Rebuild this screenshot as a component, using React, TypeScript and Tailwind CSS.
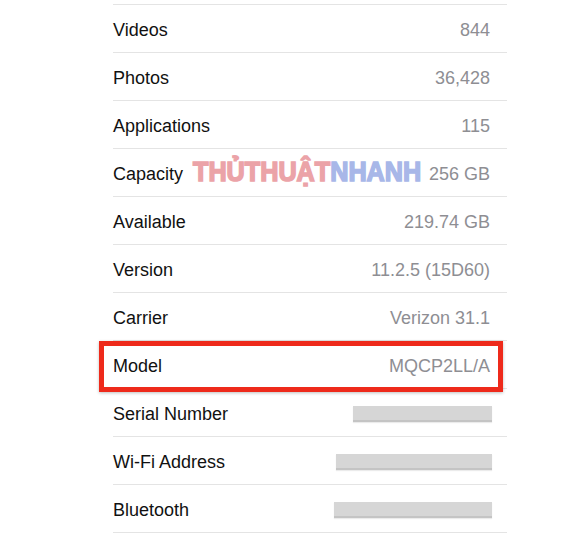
import type { ReactNode } from 'react';

type Row = { label: string; value?: string; bar?: number };

const ROWS: Row[] = [
  { label: 'Videos', value: '844' },
  { label: 'Photos', value: '36,428' },
  { label: 'Applications', value: '115' },
  { label: 'Capacity', value: '256 GB' },
  { label: 'Available', value: '219.74 GB' },
  { label: 'Version', value: '11.2.5 (15D60)' },
  { label: 'Carrier', value: 'Verizon 31.1' },
  { label: 'Model', value: 'MQCP2LL/A' },
  { label: 'Serial Number', bar: 139 },
  { label: 'Wi-Fi Address', bar: 156 },
  { label: 'Bluetooth', bar: 158 },
];

// blurred-out value, drawn as a grey strip like in the screenshot
function Redacted({ width }: { width: number }) {
  return (
    <span
      className="block h-[16px] -mr-[2px] bg-[#d6d6d6] border-b-2 border-[#c4c4c4] shadow-[0_1px_1px_rgba(0,0,0,0.08)]"
      style={{ width }}
    />
  );
}

function InfoRow({ row, children }: { row: Row; children?: ReactNode }) {
  return (
    <div className="relative h-[48px] flex items-center justify-between pr-[17px] pt-[3px] border-b border-[#e4e4e4]">
      <span className="text-[18px] text-[#111]">{row.label}</span>
      {row.bar ? (
        <Redacted width={row.bar} />
      ) : (
        <span className="text-[18px] text-[#8e8e93]">{row.value}</span>
      )}
      {children}
    </div>
  );
}

export default function App() {
  return (
    <div className="relative w-[580px] h-[535px] overflow-hidden bg-white font-['Liberation_Sans',Arial,sans-serif]">
      <div className="ml-[113px] w-[394px] pt-[4px]">
        <div className="h-px bg-[#e4e4e4]" />
        {ROWS.map((row) => (
          <InfoRow key={row.label} row={row}>
            {row.label === 'Model' && (
              <div className="absolute -left-[14px] right-[4px] top-0 -bottom-[4px] border-[5px] border-[#ee2a1b] shadow-[0_1px_3px_rgba(0,0,0,0.25)]" />
            )}
          </InfoRow>
        ))}
      </div>

      {/* watermark */}
      <div className="absolute left-[193px] top-[158px] flex text-[28px] font-bold tracking-[0px] leading-none origin-left scale-x-[0.9] pointer-events-none [-webkit-text-stroke:1.6px_currentColor]">
        <span className="text-[#eba3a8]">THỦTHUẬT</span>
        <span className="text-[#a8b7e8]">NHANH</span>
      </div>
    </div>
  );
}
